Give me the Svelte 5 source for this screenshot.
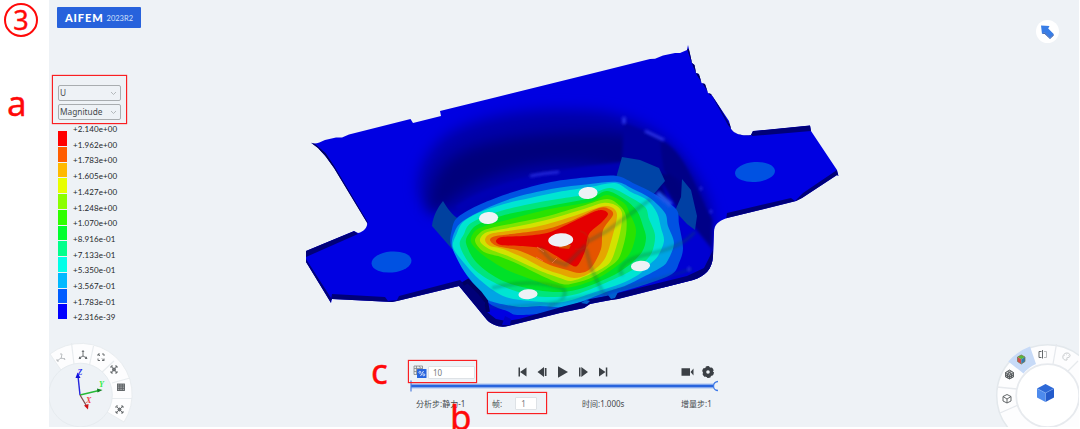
<script>
  let field = "U";
  let component = "Magnitude";
  let frameCount = "10";
  let frame = "1";

  const legend = [
    { value: "+2.140e+00", color: "#ff0000" },
    { value: "+1.962e+00", color: "#ff5d00" },
    { value: "+1.783e+00", color: "#ffb900" },
    { value: "+1.605e+00", color: "#e8ff00" },
    { value: "+1.427e+00", color: "#8bff00" },
    { value: "+1.248e+00", color: "#2eff00" },
    { value: "+1.070e+00", color: "#00ff2e" },
    { value: "+8.916e-01", color: "#00ff8b" },
    { value: "+7.133e-01", color: "#00ffe8" },
    { value: "+5.350e-01", color: "#00b9ff" },
    { value: "+3.567e-01", color: "#005dff" },
    { value: "+1.783e-01", color: "#0000ff" },
    { value: "+2.316e-39" },
  ];

  // contour bands of the pressed floor, outermost first
  const bands = [
    { color: "#0052e2", points: [[451,246],[452,229],[458,217],[481,204],[513,192],[551,182],[590,177],[617,176],[635,184],[653,193],[676,209],[679,224],[683,248],[679,263],[672,274],[647,284],[610,295],[590,300],[563,311],[520,315],[507,311],[490,304],[476,289],[465,268]] },
    { color: "#00a4e5", points: [[452,246],[455,231],[463,221],[485,209],[513,198],[551,189],[590,184],[617,182],[633,189],[650,198],[665,213],[668,226],[674,243],[668,260],[660,268],[627,285],[609,291],[580,302],[562,307],[540,306],[520,307],[497,303],[485,298],[473,283],[462,268]] },
    { color: "#00e5d2", points: [[453,247],[457,233],[463,222],[478,213],[504,204],[530,198],[558,192],[590,187],[615,183],[631,192],[647,200],[657,213],[661,228],[664,241],[658,256],[650,264],[638,275],[620,284],[595,292],[563,302],[530,301],[503,296],[480,280],[464,263]] },
    { color: "#00e57d", points: [[460,246],[464,234],[471,223],[497,212],[530,204],[558,199],[590,194],[610,188],[628,196],[645,207],[649,219],[655,235],[652,252],[643,263],[627,273],[603,284],[577,294],[555,297],[530,295],[497,284],[473,268]] },
    { color: "#00e129", points: [[466,243],[470,232],[477,225],[494,218],[513,213],[550,206],[590,198],[607,191],[624,199],[637,211],[643,226],[646,238],[642,252],[628,266],[610,277],[583,288],[562,292],[537,290],[503,281],[477,263]] },
    { color: "#2ae200", points: [[471,242],[475,231],[485,226],[507,220],[550,209],[590,202],[607,195],[624,203],[630,214],[636,230],[632,249],[623,261],[602,276],[580,285],[562,288],[547,285],[525,277],[505,269],[483,255]] },
    { color: "#7ee500", points: [[475,241],[481,232],[491,228],[515,223],[548,216],[582,206],[607,199],[620,206],[626,216],[626,234],[620,256],[612,265],[593,277],[575,283],[562,284],[540,275],[520,265],[501,257],[484,252]] },
    { color: "#d3e200", points: [[480,241],[485,233],[498,230],[524,225],[550,219],[584,209],[603,203],[615,205],[622,213],[620,233],[612,259],[603,268],[586,276],[571,281],[560,278],[543,272],[525,264],[508,256],[489,249]] },
    { color: "#e5a500", points: [[485,240],[490,234],[508,231],[530,228],[551,223],[574,216],[600,207],[611,207],[617,215],[612,238],[604,260],[588,274],[574,278],[560,274],[545,269],[524,258],[503,249],[490,246]] },
    { color: "#e55400", points: [[490,240],[496,236],[520,233],[547,229],[571,221],[599,208],[609,209],[613,215],[603,230],[601,249],[591,268],[580,273],[567,270],[550,265],[532,256],[517,250],[497,246]] },
    { color: "#e50000", points: [[496,241],[502,237],[524,236],[547,233],[564,226],[591,213],[602,210],[608,214],[602,222],[589,234],[585,251],[577,266],[568,263],[553,254],[541,248],[520,246],[501,245]] },
  ];

  const holes = [
    [488.5, 218, 9.6, 6],
    [588, 193, 9.6, 6],
    [560.7, 240, 12.5, 6.7],
    [528, 294.3, 9.6, 5],
    [640.5, 266, 9.6, 5.2],
  ];

  function smooth(pts) {
    const n = pts.length;
    let d = `M${pts[0][0]} ${pts[0][1]}`;
    for (let i = 0; i < n; i++) {
      const a = pts[(i - 1 + n) % n];
      const b = pts[i];
      const c = pts[(i + 1) % n];
      const e = pts[(i + 2) % n];
      d += `C${b[0] + (c[0] - a[0]) / 6.5} ${b[1] + (c[1] - a[1]) / 6.5} ${c[0] - (e[0] - b[0]) / 6.5} ${c[1] - (e[1] - b[1]) / 6.5} ${c[0]} ${c[1]}`;
    }
    return d + "Z";
  }

  const outline = "M309 138L310 142C314 145 319 143 325 140L336 137.500L342 137.500L349 134.500L410.500 119L413 123L441 116L440 111L495 97.500L600 71.500L650 59L655 58.800L663 55.500L675 53L680 53L687 50L688 45L690 54L692 63L694.500 65L696 73L699 74L701.500 83L705 84L708 93L711 94L729 121L731 129C735 135 744 136 751 135L753 131L810 125.500L811 131L837 170L838.500 176L837 175L802 198L796 201L727 218C718 221 714 225 714 232L713 256C712 270 705 276 693 280L618 299L611 300L600 302L590 304L584 308L560 313L508 326C500 328 492 325 487 320L459 286L397 301L392 302L332 299L331 303L306 262L306 251L354 231L358 233C366 231 369 224 366 221L334 168L326 157L318 148L310 142Z";
</script>

<div class="page">
  <main class="viewport">
    <svg class="model" viewBox="49 0 1031 427">
      <defs>
        <clipPath id="part"><path d={outline} /></clipPath>
        <filter id="soft" x="-20%" y="-20%" width="140%" height="140%"><feGaussianBlur stdDeviation="7" /></filter>
        <filter id="fine" x="-20%" y="-20%" width="140%" height="140%"><feGaussianBlur stdDeviation="1.500" /></filter>
      </defs>
      <path d={outline} fill="#0000e2" />
      <g clip-path="url(#part)">
        <!-- bowl walls -->
        <path d="M424 206C408 182 426 143 457 129C495 110 557 107 604 112C645 120 675 140 690 167C711 193 720 230 713 265L675 260L665 208L618 176L540 184L457 219Z" fill="#0000a8" filter="url(#soft)" />
        <path d="M430 216C427 190 436 165 462 152C495 136 560 131 610 133C642 135 669 147 682 170L701 205L700 251L681 215L636 179C600 156 500 155 446 205Z" fill="#00007b" filter="url(#soft)" />
        <path d="M624 123L660 138L667 175L622 160Z" fill="#00009c" filter="url(#fine)" />
        <path d="M660 140C685 150 695 190 712 219L711 272L699 240L684 182L664 171Z" fill="#000087" filter="url(#fine)" />
        <path d="M459 217C489 189 554 176 622 175L622 162C550 170 489 182 456 206Z" fill="#0000b4" filter="url(#fine)" />
        <path d="M661 181L676 207L690 222L712 249L711 277L660 291L676 269L681 235Z" fill="#0000d2" filter="url(#fine)" />
        <path d="M443 201C448 209 452 215 459 219L452 249L432 226C433 216 438 207 443 201Z" fill="#00419f" />
        <path d="M622 157L640 160L659 168L665 181L653 195L616 178Z" fill="#0044a7" />
        <path d="M682 179L691 190L697 216L695 230L687 224L675 211L681 197Z" fill="#0040a4" />

        {#each bands as band}
          <path d={smooth(band.points)} fill={band.color} />
        {/each}

        <!-- ribs pressed into the floor -->
        <g fill="none" stroke="#075f45" filter="url(#fine)" opacity="0.35">
          <path d="M492 288C525 280 545 283 562 288C569 293 563 302 548 307" stroke-width="3" />
          <path d="M623 275C615 270 626 259 644 255C670 250 684 244 695 232" stroke-width="3" />
          <path d="M587 242L607 231L651 199" stroke-width="3" />
          <path d="M586 249L591 268L602 291L608 297" stroke-width="3" />
          <path d="M540 248L551 260L566 265L586 245" stroke-width="3" />
          <path d="M487 307C540 309 624 291 692 269" stroke-width="2" />
        </g>
        <path d="M580 231C594 235 590 252 575 249" fill="none" stroke="#b9260b" stroke-width="2" opacity="0.35" />
        <path d="M537 247L544 252M536 257L543 261M552 263L557 258" stroke="#ff805a" stroke-width="1" opacity="0.6" />
        <path d="M560 244L571 245L569 249L559 248Z" fill="#d64d00" />

        {#each holes as hole}
          <ellipse cx={hole[0]} cy={hole[1]} rx={hole[2]} ry={hole[3]} fill="#eef2f6" transform="rotate(-4 {hole[0]} {hole[1]})" />
        {/each}
        <ellipse cx="391.500" cy="262" rx="20" ry="10.500" fill="#0052e2" transform="rotate(-5 391.500 262)" />
        <ellipse cx="755" cy="172" rx="20" ry="10" fill="#0052e2" transform="rotate(-4 755 172)" />

        <!-- folded rims -->
        <g fill="#000078">
          <path d="M306 250L354 231L358 234L306 257Z" />
          <path d="M306 259L331 298L331 304L305 261Z" />
          <path d="M332 294L385 297L388 301L397 300L399 296L460 280L463 283L470 283L478 293L482 294L487 312L496 319L506 321L519 319L565 306L585 301L590 299L612 295L618 293L687 276L704 268L713 250V280L613 304L505 332L487 323L458 287L393 304L331 300Z" />
          <path d="M752 131L811 125L811 131L752 136Z" />
          <path d="M727 213L791 198L795 201L803 193L837 170L839 177L803 200L726 220Z" />
          <path d="M711 94L714 97L731 127L728 125Z" />
        </g>
        <path d="M310 141L325 154L333 166L367 223M688 49L694 66L698 75L704 84L711 95M729 124C734 135 744 135 752 134" fill="none" stroke="#00005a" stroke-width="2" />
        <path d="M463 284L468 281L480 293L486 301L488 312" fill="none" stroke="#000061" stroke-width="4" />
        <path d="M502 325L505 316L511 319L510 325Z" fill="#0000c4" />
        <path d="M581 303L586 300L590 301L587 304ZM608 295L618 292L615 298L611 299Z" fill="#005fcf" />

        <!-- light glints -->
        <g stroke="#3038ed" fill="none" filter="url(#fine)">
          <path d="M530 176Q544 173 559 172" stroke-width="2" />
          <path d="M645 131L664 140" stroke-width="2.500" />
          <path d="M657 193L671 205" stroke-width="5" stroke="#2459e9" />
          <path d="M624 117V124" stroke-width="3" />
          <path d="M701 187V190M711 210V213M689 267V271" stroke-width="2" />
        </g>
      </g>
    </svg>

    <div class="brand"><strong>AIFEM</strong><span>2023R2</span></div>

    <button class="cursor-btn" aria-label="select">
      <svg width="23" height="23" viewBox="0 0 23 23">
        <path d="M5 5.500L13.500 6L12.200 8.500L17.700 14L14 18L8.500 12.300L6 14Z" fill="#387de6" />
        <path d="M6 14L8.500 12.300L14 18L17.700 14V15.500L14 19L8.500 13.800Z" fill="#204fa9" />
      </svg>
    </button>

    <section class="result">
      {#each [field, component] as item}
        <div class="select">
          <span>{item}</span>
          <svg width="7" height="5" viewBox="0 0 7 5"><path d="M1 1L3.500 3.500L6 1" fill="none" stroke="#a5a9ad" stroke-width="0.800" /></svg>
        </div>
      {/each}
      <div class="legend">
        <div class="swatches">
          {#each legend.slice(0, 12) as row}
            <i style="background: {row.color}"></i>
          {/each}
        </div>
        <div class="values">
          {#each legend as row}
            <span>{row.value}</span>
          {/each}
        </div>
      </div>
    </section>

    <svg class="view-wheel" viewBox="49 340 90 87">
      <path d="M50 354A51 51 0 0 1 124 422L107 412A32 32 0 0 0 61 370Z" fill="#fdfdfe" stroke="#e9edf0" />
      <path d="M71.500 343L74 364M93.500 346L89.500 365M114 361L100 374M130 378L112 383M132 398.500H112" stroke="#e8ecef" stroke-width="1.200" />
      <circle cx="80.500" cy="395" r="31.800" fill="#eef2f6" stroke="#e6ebef" />
      <g fill="none" stroke="#5d6265" stroke-width="0.900">
        <path d="M61 359L62 354M61 358L57 361M61 358L65 359M61 353V355M57 359V361H59M64 358L65 360" stroke="#b4b8bb" />
        <path d="M83 356V351M83 356L79.500 358M83 356L86.500 358M82 352L83 350.500L84 352M80 356.500L79 358.500H81M86 356.500L87 358.500H85" />
        <path d="M98 356V354H100M102 354H104V356M98 358.500V360.500H100M102 360.500H104V358.500M100 356L98 354M102 358.500L104 360.500" />
        <path d="M111 368V366H113M115 366H117V368M111 371V373H113M115 373H117V371M111.500 366.500L117 373M117 366L111 373" />
        <rect x="117.500" y="384" width="7" height="6.500" fill="#a5a8aa" />
        <path d="M117.500 386H124.500M117.500 388.300H124.500M119.800 384V390.500M122.300 384V390.500" />
        <path d="M116 408V406H118M121 406H123V408M116 411V413H118M121 413H123V411M117 407L123 413M123 406L116 413" />
        <circle cx="119.500" cy="409.500" r="1.500" fill="#74787b" />
        <circle cx="114" cy="369.500" r="1.500" fill="#74787b" />
      </g>
      <path d="M80 395L78 376" stroke="#2424dc" stroke-width="1.400" />
      <path d="M75.500 378L77.600 372.500L80.500 378Z" fill="#1010d8" />
      <path d="M80 395L99 390.500" stroke="#26b936" stroke-width="1.300" />
      <path d="M97 388.500L102.500 390L97.500 392.500Z" fill="#108120" />
      <path d="M80 395L86 405" stroke="#82474b" stroke-width="1.300" />
      <path d="M84 405.500L88.500 404L88 409.500Z" fill="#cf1015" />
      <g class="axis"><text x="77.500" y="375" fill="#2929ef">Z</text><text x="99" y="386.500" fill="#32ed42">Y</text><text x="86" y="403" fill="#f13d42">X</text></g>
    </svg>

    <svg class="display-wheel" viewBox="993 340 86 87">
      <circle cx="1047.700" cy="395.700" r="51" fill="#fdfdfe" stroke="#e3e8ec" stroke-width="1.500" />
      <path d="M1008.300 361.500A52 52 0 0 1 1030 346.500L1036 364A33 33 0 0 0 1023.500 373.500Z" fill="#c7daf7" />
      <path d="M1056.500 344L1053 364M1078 361L1068 371M997 387L1017 389M1000 413L1018 405" stroke="#e6e9ed" stroke-width="1.300" />
      <circle cx="1047.700" cy="395.700" r="31.500" fill="#fff" stroke="#e7eaee" stroke-width="1.800" />
      <path d="M1037 388.500L1045.500 384L1054 388.500L1045.500 393Z" fill="#2e69d7" />
      <path d="M1037 388.500L1045.500 393V402L1037 397.500Z" fill="#4e8bed" />
      <path d="M1054 388.500L1045.500 393V402L1054 397.500Z" fill="#245bcb" />
      <path d="M1037 388.500L1045.500 393L1054 388.500M1045.500 393V402" stroke="#83b1f4" fill="none" stroke-width="0.500" />
      <path d="M1021.300 355L1025 357L1021.300 359.300L1017.500 357Z" fill="#58b83c" />
      <path d="M1017.500 357L1021.300 359.300V364L1017.500 361.500Z" fill="#d34b4b" />
      <path d="M1025 357L1021.300 359.300V364L1025 361.500Z" fill="#347bac" />
      <path d="M1017.500 357L1021.300 355L1025 357V361.500L1021.300 364L1017.500 361.500Z" fill="none" stroke="#77713f" stroke-width="0.700" />
      <g fill="none" stroke="#53585a" stroke-width="0.900">
        <path d="M1009.500 370L1013.500 372.500V377L1009.500 379L1005.500 377V372.500ZM1005.500 372.500L1009.500 375L1013.500 372.500M1009.500 375V379M1007.500 371.500L1011.500 374V378M1011.500 371.500L1007.500 374V378M1005.500 375L1009.500 377L1013.500 375" fill="#a6a8aa" />
        <path d="M1007 394.500L1011 396.500V401L1007 403L1003 401V396.500ZM1003 396.500L1007 399L1011 396.500M1007 399V403" />
        <path d="M1042.500 350V358.500M1041.500 351.500H1039V357.500H1041.500" />
        <path d="M1044 351.500H1046.500V357.500H1044" stroke="#b3b6b8" />
        <path d="M1067 360C1061 361 1062 353 1067 353C1071 353 1071 358 1067.500 357.500C1066 357.500 1067.500 359 1067 360M1064.500 355.500H1065M1066.500 354.700H1067M1068.500 355.500H1069" stroke="#c2c5c7" />
      </g>
    </svg>

    <section class="player">
      <div class="controls">
        <svg class="count-icon" width="14" height="14" viewBox="0 0 14 14">
          <path d="M1 1H9.500V9.500H1ZM1 3.500H9.500M3.500 1V9.500M1 6.500H4M6 1L8 3.500" fill="#e8eaec" stroke="#83888c" stroke-width="0.800" />
          <rect x="4" y="4" width="9.500" height="9" rx="0.500" fill="#2864dd" />
          <path d="M10.500 6L7.500 11" stroke="#fff" stroke-width="0.800" />
          <circle cx="6.900" cy="7.300" r="1" fill="none" stroke="#fff" stroke-width="0.700" /><circle cx="10.800" cy="9.800" r="1" fill="none" stroke="#fff" stroke-width="0.700" />
        </svg>
        <div class="input count">{frameCount}</div>
        <svg class="transport" width="94" height="14" viewBox="0 0 94 14">
          <g fill="#3b4045">
            <path d="M1.500 2.500H3V11.500H1.500ZM9.500 2.500V11.500L3 7Z" />
            <path d="M27 2V12L20.500 7ZM27.800 3H29.500V11H27.800Z" />
            <path d="M41 1.300V12.700L51 7Z" />
            <path d="M62 2.500H63.500V11.500H62ZM64.300 2V12L71 7Z" />
            <path d="M82 2.500V11.500L88.500 7ZM88.800 2.500H90.300V11.500H88.800Z" />
          </g>
        </svg>
        <svg class="tools" width="34" height="14" viewBox="0 0 34 14">
          <path d="M0.500 3.300H9V10.800H0.500ZM9.500 7L12.500 3.500V10.500Z" fill="#3b4045" />
          <circle cx="27" cy="7" r="3.500" fill="none" stroke="#3b4045" stroke-width="3.400" />
          <circle cx="27" cy="7" r="5.100" fill="none" stroke="#3b4045" stroke-width="1.700" stroke-dasharray="3.300 2.040" />
        </svg>
      </div>
      <svg class="track" width="308" height="12" viewBox="0 0 308 12">
        <path d="M1 6H304" stroke="#a5c0f0" stroke-width="5" />
        <path d="M1 6H304" stroke="#2864dd" stroke-width="2.500" />
        <path d="M1 0.500V11.500" stroke="#4b7bdd" stroke-width="1.200" />
        <circle cx="308" cy="6" r="4.500" fill="#eef2f6" stroke="#407be9" stroke-width="1.300" />
      </svg>
      <div class="status">
        <span class="step">分析步:静力-1</span>
        <label class="frame">帧:<span class="input">{frame}</span></label>
        <span class="time">时间:1.000s</span>
        <span>增量步:1</span>
      </div>
    </section>
  </main>

  <!-- callouts -->
  <div class="mark three">3</div>
  <div class="mark a">a</div>
  <div class="mark b">b</div>
  <div class="mark c">c</div>
  <div class="box box-a"></div>
  <div class="box box-b"></div>
  <div class="box box-c"></div>
</div>

<style>
  .page {
    position: relative;
    width: 1080px;
    height: 429px;
    padding-left: 49px;
    box-sizing: border-box;
    background: #fff;
    overflow: hidden;
    font-family: "Noto Sans", "Noto Sans CJK SC", sans-serif;
    color: #45494d;
  }

  .viewport {
    position: relative;
    width: 1030px;
    height: 427px;
    background: #eef2f6;
    overflow: hidden;
  }

  svg {
    display: block;
    flex: none;
  }

  .model {
    position: absolute;
    left: 0;
    top: 0;
    width: 1031px;
    height: 427px;
  }

  .brand {
    position: absolute;
    left: 8px;
    top: 7px;
    width: 84px;
    height: 21px;
    display: flex;
    align-items: center;
    justify-content: center;
    gap: 3px;
    border-radius: 1px;
    background: #2762dc;
    color: #fff;
    font-family: Lato, sans-serif;
  }

  .brand strong {
    font-size: 11px;
    font-weight: 900;
    letter-spacing: 0.9px;
  }

  .brand span {
    font-size: 7.5px;
    color: #d1e0fb;
    padding-top: 2px;
  }

  .cursor-btn {
    position: absolute;
    left: 987px;
    top: 20px;
    width: 23px;
    height: 23px;
    padding: 0;
    border: 0;
    border-radius: 50%;
    background: #fff;
  }

  .result {
    position: absolute;
    left: 9px;
    top: 85px;
    width: 63px;
  }

  .select {
    display: flex;
    align-items: center;
    justify-content: space-between;
    height: 16px;
    margin-bottom: 3px;
    padding: 0 3px 0 1px;
    box-sizing: border-box;
    border: 1px solid #a9adb0;
    border-radius: 2px;
    font-size: 8.3px;
    line-height: 14px;
  }

  .legend {
    display: flex;
    gap: 6px;
    margin-top: -1px;
  }

  .swatches {
    display: grid;
    grid-template-rows: repeat(12, 14.75px);
    gap: 1px;
    width: 9px;
    padding-top: 9px;
  }

  .values {
    display: flex;
    flex-direction: column;
    font: 8px/15.7px Lato, sans-serif;
    letter-spacing: 0.1px;
    color: #24272b;
    white-space: nowrap;
  }

  .view-wheel {
    position: absolute;
    left: 0;
    top: 340px;
    width: 90px;
    height: 87px;
  }

  .axis {
    font: italic bold 8px "Liberation Serif", serif;
  }

  .display-wheel {
    position: absolute;
    left: 944px;
    top: 340px;
    width: 86px;
    height: 87px;
  }

  .player {
    position: absolute;
    left: 361px;
    top: 364px;
    width: 308px;
  }

  .controls {
    display: flex;
    align-items: center;
    height: 16px;
    padding-left: 3px;
  }

  .input {
    box-sizing: border-box;
    height: 13px;
    border: 1px solid #dee2e6;
    border-radius: 1px;
    background: #fff;
    color: #777b80;
    font-size: 8px;
    line-height: 11px;
  }

  .count {
    width: 47px;
    margin-left: 1px;
    padding-left: 4px;
  }

  .transport {
    margin-left: 42px;
  }

  .tools {
    margin-left: 70px;
  }

  .status {
    display: flex;
    align-items: center;
    height: 14px;
    margin-top: 4px;
    padding-left: 6px;
    font-size: 8px;
    white-space: nowrap;
  }

  .step {
    width: 76px;
  }

  .frame {
    display: flex;
    align-items: center;
    gap: 13px;
    width: 90px;
  }

  .frame .input {
    width: 22px;
    padding-left: 5px;
  }

  .time {
    width: 99px;
  }

  .mark {
    position: absolute;
    color: #ff0909;
    font-size: 35px;
    font-weight: 400;
    line-height: 40px;
    -webkit-text-stroke: 0.4px #ff0909;
  }

  .three {
    left: 4px;
    top: 3px;
    width: 34px;
    height: 34px;
    box-sizing: border-box;
    border: 2px solid #ff0909;
    border-radius: 50%;
    font-size: 27px;
    line-height: 29px;
    text-align: center;
  }

  .a {
    left: 7px;
    top: 83px;
  }

  .b {
    left: 450px;
    top: 397px;
  }

  .c {
    left: 371px;
    top: 351px;
  }

  .box {
    position: absolute;
    box-sizing: border-box;
    border: 1px solid #fa1f22;
    box-shadow: 0 0 1px #fa1f22;
  }

  .box-a {
    left: 52px;
    top: 75px;
    width: 75px;
    height: 49px;
  }

  .box-b {
    left: 487px;
    top: 392px;
    width: 60px;
    height: 22px;
  }

  .box-c {
    left: 408px;
    top: 360px;
    width: 69px;
    height: 23px;
  }
</style>
